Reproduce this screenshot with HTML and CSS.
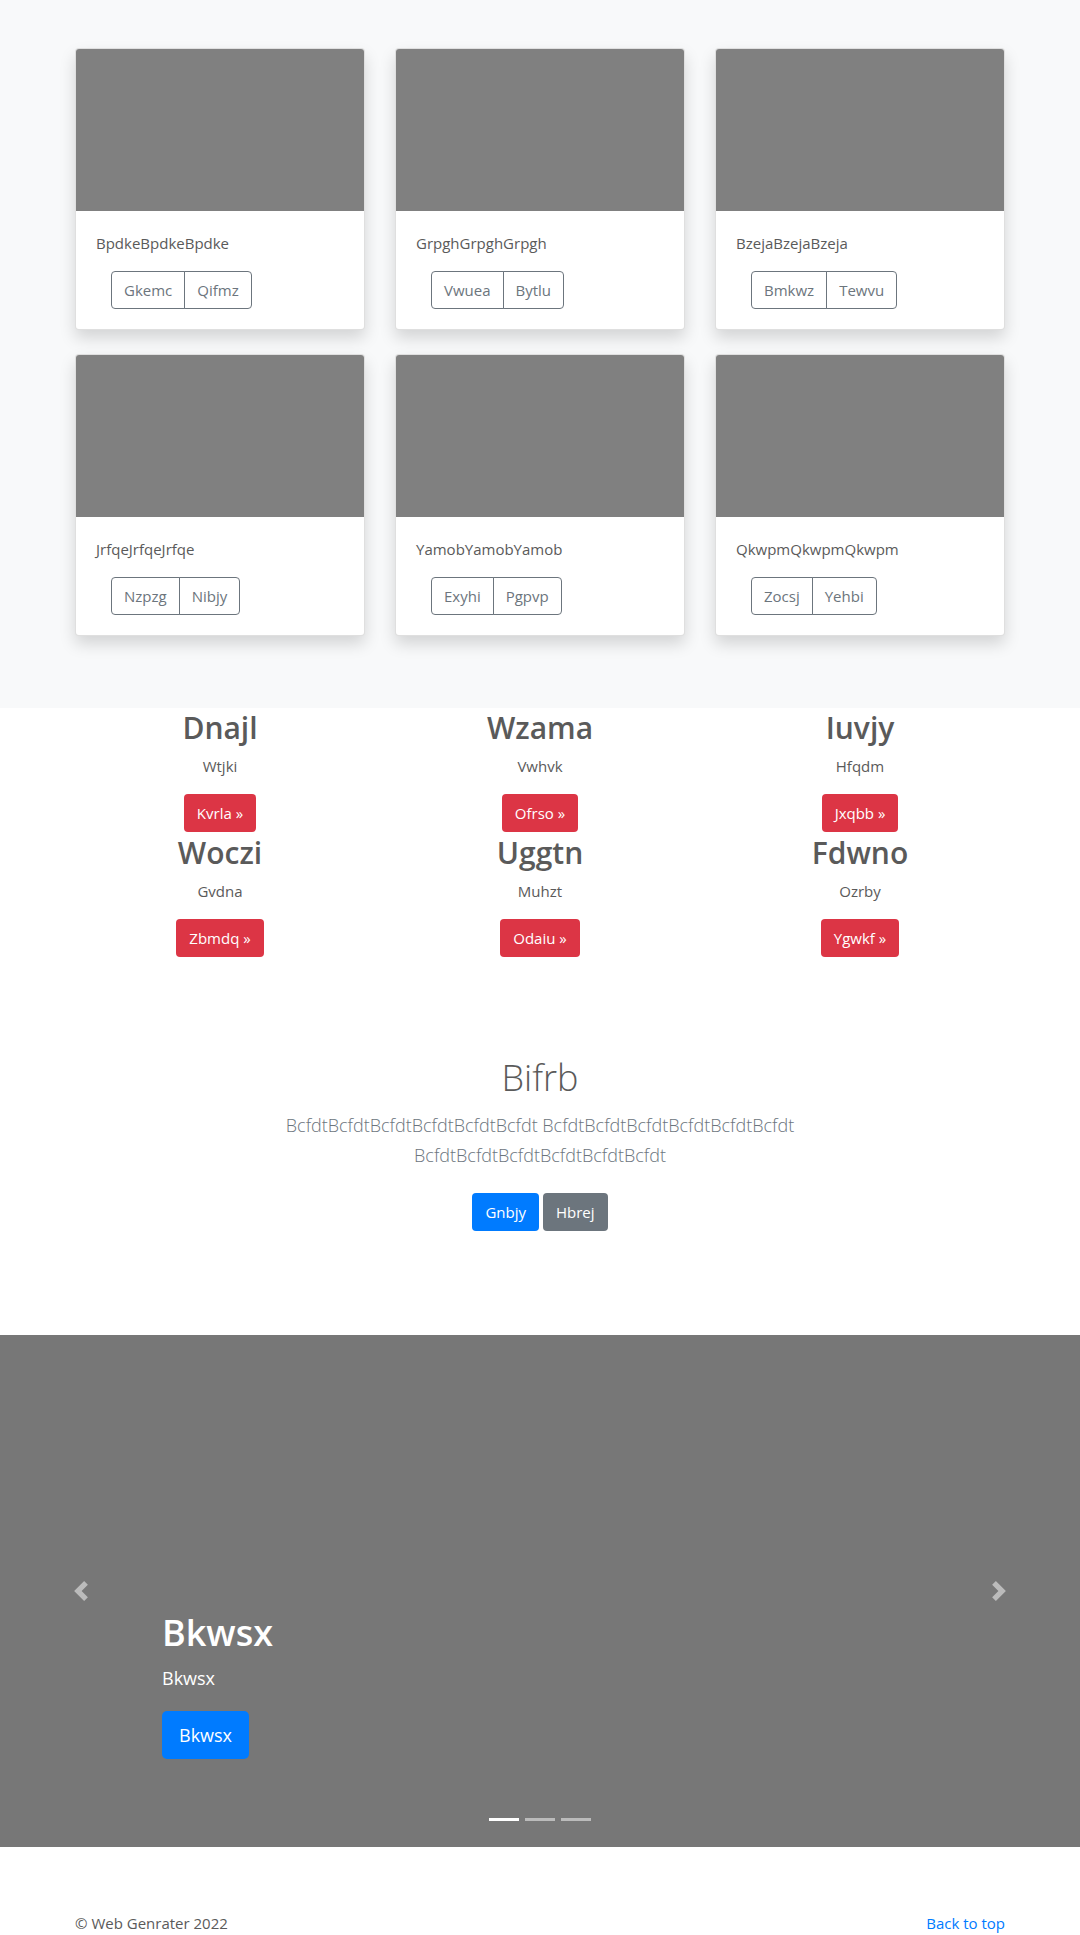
FILE: index.html
```html
<!DOCTYPE html>
<html lang="en">
<head>
<meta charset="utf-8">
<meta name="viewport" content="width=device-width, initial-scale=1">
<title>Web Genrater</title>
<link rel="stylesheet" href="styles.css">
</head>
<body>
<main>
  <section class="album">
    <div class="container card-grid">
      <article class="card">
        <div class="card-image"></div>
        <div class="card-body"><p>BpdkeBpdkeBpdke</p>
          <div class="btn-group"><button type="button" class="btn btn-outline">Gkemc</button><button type="button" class="btn btn-outline">Qifmz</button></div></div>
      </article>
      <article class="card">
        <div class="card-image"></div>
        <div class="card-body"><p>GrpghGrpghGrpgh</p>
          <div class="btn-group"><button type="button" class="btn btn-outline">Vwuea</button><button type="button" class="btn btn-outline">Bytlu</button></div></div>
      </article>
      <article class="card">
        <div class="card-image"></div>
        <div class="card-body"><p>BzejaBzejaBzeja</p>
          <div class="btn-group"><button type="button" class="btn btn-outline">Bmkwz</button><button type="button" class="btn btn-outline">Tewvu</button></div></div>
      </article>
      <article class="card">
        <div class="card-image"></div>
        <div class="card-body"><p>JrfqeJrfqeJrfqe</p>
          <div class="btn-group"><button type="button" class="btn btn-outline">Nzpzg</button><button type="button" class="btn btn-outline">Nibjy</button></div></div>
      </article>
      <article class="card">
        <div class="card-image"></div>
        <div class="card-body"><p>YamobYamobYamob</p>
          <div class="btn-group"><button type="button" class="btn btn-outline">Exyhi</button><button type="button" class="btn btn-outline">Pgpvp</button></div></div>
      </article>
      <article class="card">
        <div class="card-image"></div>
        <div class="card-body"><p>QkwpmQkwpmQkwpm</p>
          <div class="btn-group"><button type="button" class="btn btn-outline">Zocsj</button><button type="button" class="btn btn-outline">Yehbi</button></div></div>
      </article>
    </div>
  </section>

  <section class="container features">
    <div class="feature"><h2>Dnajl</h2><p>Wtjki</p><a class="btn btn-danger" href="#">Kvrla »</a></div>
    <div class="feature"><h2>Wzama</h2><p>Vwhvk</p><a class="btn btn-danger" href="#">Ofrso »</a></div>
    <div class="feature"><h2>Iuvjy</h2><p>Hfqdm</p><a class="btn btn-danger" href="#">Jxqbb »</a></div>
    <div class="feature"><h2>Woczi</h2><p>Gvdna</p><a class="btn btn-danger" href="#">Zbmdq »</a></div>
    <div class="feature"><h2>Uggtn</h2><p>Muhzt</p><a class="btn btn-danger" href="#">Odaiu »</a></div>
    <div class="feature"><h2>Fdwno</h2><p>Ozrby</p><a class="btn btn-danger" href="#">Ygwkf »</a></div>
  </section>

  <section class="intro">
    <h1>Bifrb</h1>
    <p class="lead">BcfdtBcfdtBcfdtBcfdtBcfdtBcfdt BcfdtBcfdtBcfdtBcfdtBcfdtBcfdt BcfdtBcfdtBcfdtBcfdtBcfdtBcfdt</p>
    <div class="actions"><a class="btn btn-primary" href="#">Gnbjy</a><a class="btn btn-secondary" href="#">Hbrej</a></div>
  </section>

  <section class="carousel" aria-label="Highlights">
    <button type="button" class="control" aria-label="Previous">
      <svg width="20" height="20" viewBox="0 0 8 8"><path fill="#fff" d="M5.25 0l-4 4 4 4 1.5-1.5L4.250 4l2.500-2.500L5.250 0z"/></svg>
    </button>
    <div class="caption">
      <h2>Bkwsx</h2>
      <p>Bkwsx</p>
      <a class="btn btn-primary btn-lg" href="#">Bkwsx</a>
    </div>
    <button type="button" class="control" aria-label="Next">
      <svg width="20" height="20" viewBox="0 0 8 8"><path fill="#fff" d="M2.750 0l-1.500 1.500L3.750 4l-2.500 2.500L2.750 8l4-4-4-4z"/></svg>
    </button>
    <div class="indicators"><span class="active"></span><span></span><span></span></div>
  </section>
</main>
<footer class="container footer">
  <p>© Web Genrater 2022</p>
  <a href="#">Back to top</a>
</footer>
</body>
</html>
```
FILE: styles.css
```css
*, *::before, *::after { box-sizing: border-box; }

body {
  margin: 0;
  background: #fff;
  color: #5a5a5a;
  font: 400 15px/24px "Open Sans", "Noto Sans", sans-serif;
}

h1, h2, p { margin: 0; }
a { color: #007bff; text-decoration: none; }

.container {
  width: 100%;
  max-width: 960px;
  margin: 0 auto;
  padding: 0 15px;
}

.btn {
  display: inline-block;
  padding: 6px 12px;
  border: 1px solid transparent;
  border-radius: 4px;
  font: inherit;
  text-align: center;
  cursor: pointer;
}
.btn-outline { background: transparent; border-color: #6c757d; color: #6c757d; }
.btn-primary { background: #007bff; color: #fff; }
.btn-secondary { background: #6c757d; color: #fff; }
.btn-danger { background: #dc3545; color: #fff; }
.btn-lg { padding: 8px 16px; border-radius: 5px; font-size: 18px; line-height: 30px; }

.album { padding: 48px 0 72px; background: #f8f9fa; }
.card-grid {
  display: grid;
  grid-template-columns: repeat(3, 1fr);
  gap: 24px 30px;
}
.card {
  overflow: hidden;
  background: #fff;
  border: 1px solid rgba(0, 0, 0, .125);
  border-radius: 4px;
  box-shadow: 0 8px 16px rgba(0, 0, 0, .15);
}
.card-image { height: 162px; background: #808080; }
.card-body { padding: 20px; }
.card-body p { margin-bottom: 16px; }
.btn-group { display: flex; padding-left: 15px; }
.btn-group .btn:first-child { border-radius: 4px 0 0 4px; }
.btn-group .btn:last-child { margin-left: -1px; border-radius: 0 4px 4px 0; }

.features {
  display: grid;
  grid-template-columns: repeat(3, 1fr);
  gap: 1px 30px;
  text-align: center;
}
.feature h2 { margin-bottom: 6px; font-size: 30px; font-weight: 600; line-height: 40px; }
.feature p { margin-bottom: 16px; }

.intro {
  max-width: 576px;
  margin: 0 auto;
  padding: 97px 15px 104px;
  text-align: center;
}
.intro h1 { margin-bottom: 8px; font-size: 36px; font-weight: 300; line-height: 48px; }
.lead { color: #6c757d; font-size: 18px; font-weight: 300; line-height: 30px; }
.actions { display: flex; justify-content: center; gap: 4px; margin-top: 23px; }

.carousel {
  position: relative;
  display: grid;
  grid-template-columns: 15% 1fr 15%;
  min-height: 512px;
  background: #777;
  color: #fff;
}
.control {
  display: flex;
  align-items: center;
  justify-content: center;
  padding: 0;
  border: 0;
  background: none;
  opacity: .5;
  cursor: pointer;
}
.caption { align-self: end; padding-bottom: 88px; }
.caption h2 { margin-bottom: 6px; font-size: 36px; font-weight: 600; line-height: 48px; }
.caption p { margin-bottom: 18px; font-size: 18px; line-height: 30px; }
.caption .btn { vertical-align: top; }
.indicators {
  position: absolute;
  right: 15%;
  bottom: 26px;
  left: 15%;
  display: flex;
  justify-content: center;
  gap: 6px;
}
.indicators span { width: 30px; height: 3px; background: #fff; opacity: .5; }
.indicators .active { opacity: 1; }

.footer { display: flex; justify-content: space-between; padding-top: 64px; }
```
